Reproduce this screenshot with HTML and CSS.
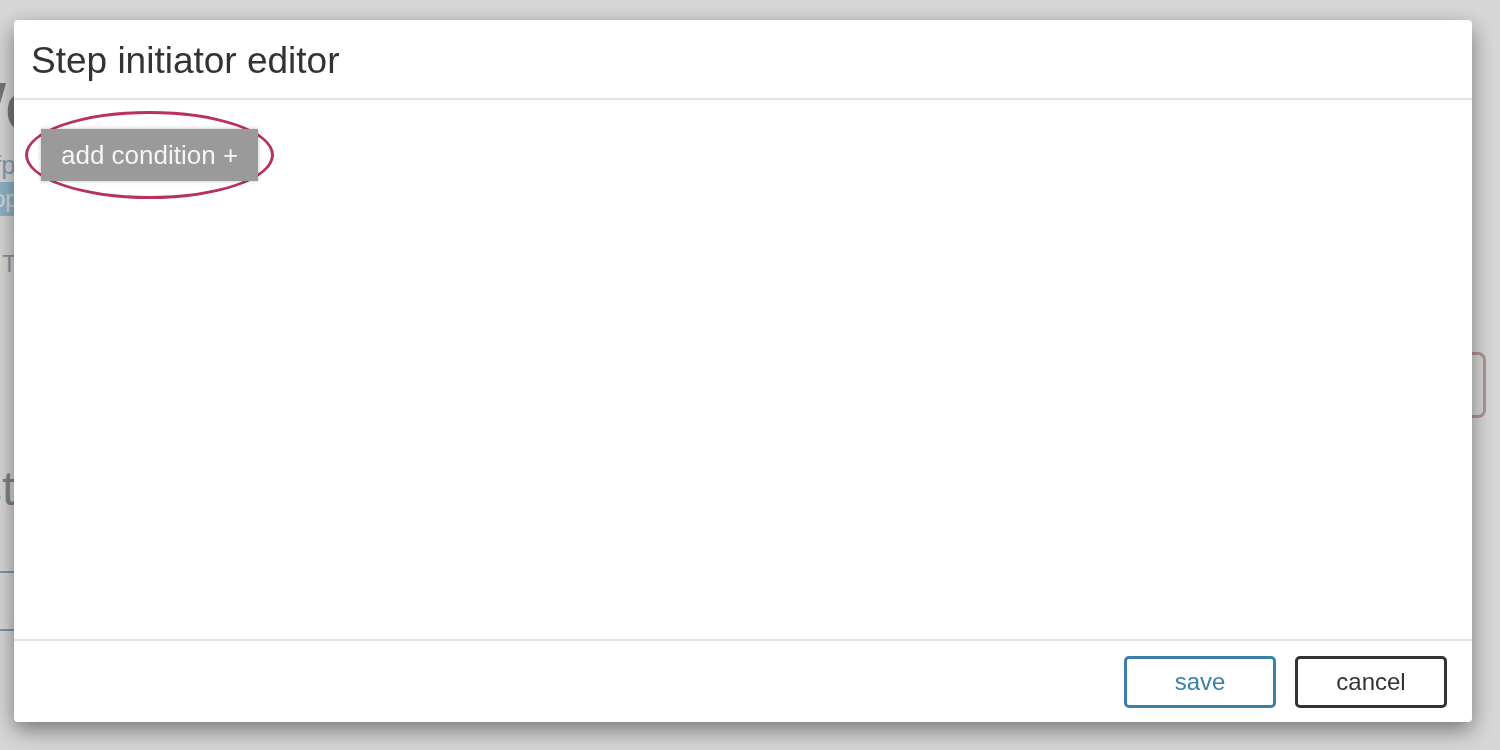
FILE: index.html
```html
<!DOCTYPE html>
<html lang="en">
<head>
    <meta charset="UTF-8">
    <meta name="viewport" content="width=device-width, initial-scale=1.0">
    <title>Step initiator editor</title>
    <link rel="stylesheet" href="styles.css">
</head>
<body>
    <div class="page">
        <div class="page-main">
            <h1 class="page-title">Workflow</h1>
            <p class="page-type">fp</p>
            <span class="page-badge">op</span>
            <p class="page-meta">T</p>
            <h2 class="page-sub">st</h2>
            <div class="page-rule"></div>
            <div class="page-rule second"></div>
        </div>
        <div class="page-side">
            <div class="page-box"></div>
        </div>
    </div>

    <div class="backdrop">
        <div class="modal">
            <div class="modal-header">
                <h4 class="modal-title">Step initiator editor</h4>
            </div>
            <div class="modal-body">
                <div class="highlight">
                    <button class="btn-add">add condition +</button>
                </div>
            </div>
            <div class="modal-footer">
                <button class="btn btn-save">save</button>
                <button class="btn btn-cancel">cancel</button>
            </div>
        </div>
    </div>
</body>
</html>
```

FILE: styles.css
```css
html, body {
    margin: 0;
    padding: 0;
    height: 100%;
    overflow: hidden;
}
body {
    font-family: "Liberation Sans", Arial, sans-serif;
    background-color: #ffffff;
    color: #333;
}

/* page behind the dialog */
.page {
    display: flex;
    justify-content: space-between;
    height: 100%;
}
.page-main {
    margin-left: -56px;
    padding-top: 70px;
}
.page-title {
    margin: 0;
    font-size: 66px;
    font-weight: normal;
    line-height: 72px;
    color: #8e8e8e;
    white-space: nowrap;
}
.page-type {
    margin: 8px 0 0 0;
    padding-left: 50px;
    font-size: 26px;
    line-height: 30px;
    color: #97bdd7;
}
.page-badge {
    display: inline-block;
    margin-top: 2px;
    padding: 2px 10px 2px 48px;
    background: #abd5ee;
    color: #fff;
    font-size: 24px;
    line-height: 30px;
}
.page-meta {
    margin: 33px 0 0 58px;
    font-size: 24px;
    line-height: 30px;
    color: #b0b0b0;
}
.page-sub {
    margin: 180px 0 0 34px;
    font-size: 48px;
    font-weight: normal;
    line-height: 60px;
    color: #9c9c9c;
}
.page-rule {
    width: 200px;
    margin-top: 52px;
    border-top: 2px solid #95b3c8;
}
.page-rule.second {
    margin-top: 56px;
}
.page-side {
    padding-top: 352px;
}
.page-box {
    width: 60px;
    height: 60px;
    margin-right: 14px;
    border: 3px solid #d6aeb0;
    border-radius: 8px;
}

/* dialog */
.backdrop {
    position: fixed;
    inset: 0;
    background: rgba(0, 0, 0, 0.16);
}
.modal {
    margin: 20px 28px 0 14px;
    height: 702px;
    display: flex;
    flex-direction: column;
    background: #ffffff;
    border-radius: 4px;
    box-shadow: 0 8px 22px rgba(0, 0, 0, 0.45);
}
.modal-header {
    padding: 21px 17px 17px 17px;
    border-bottom: 2px solid #e5e5e5;
}
.modal-title {
    margin: 0;
    font-size: 37px;
    font-weight: normal;
    line-height: 40px;
    color: #333;
}
.modal-body {
    flex: 1;
    padding: 11px 11px;
}
.highlight {
    display: inline-block;
    padding: 15px 13px 15px 13px;
    border: 3px solid #b8315f;
    border-radius: 50%;
}
.btn-add {
    display: block;
    padding: 0 20px;
    height: 52px;
    border: none;
    background: #9a9a9a;
    color: #f4f4f4;
    font-family: inherit;
    font-size: 26px;
    box-shadow: 0 0 4px rgba(0, 0, 0, 0.25);
}
.modal-footer {
    display: flex;
    justify-content: flex-end;
    gap: 19px;
    padding: 15px 25px 14px 0;
    border-top: 2px solid #e5e5e5;
}
.btn {
    width: 152px;
    height: 52px;
    background: #fff;
    border-radius: 5px;
    font-family: inherit;
    font-size: 24px;
}
.btn-save {
    border: 3px solid #3a80a9;
    color: #3a80a9;
}
.btn-cancel {
    border: 3px solid #333;
    color: #333;
}
```
